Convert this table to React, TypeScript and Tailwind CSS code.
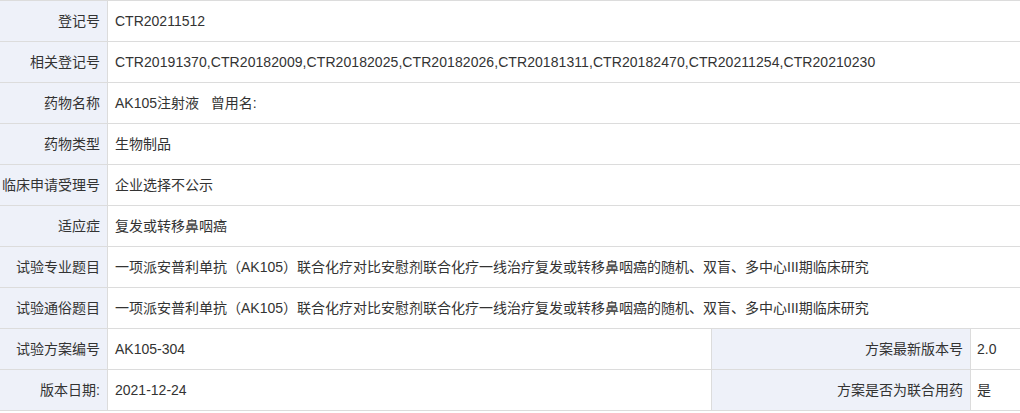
const rows: [string, string][] = [
  ["登记号", "CTR20211512"],
  [
    "相关登记号",
    "CTR20191370,CTR20182009,CTR20182025,CTR20182026,CTR20181311,CTR20182470,CTR20211254,CTR20210230",
  ],
  ["药物名称", "AK105注射液\u00a0\u00a0\u00a0曾用名:"],
  ["药物类型", "生物制品"],
  ["临床申请受理号", "企业选择不公示"],
  ["适应症", "复发或转移鼻咽癌"],
  [
    "试验专业题目",
    "一项派安普利单抗（AK105）联合化疗对比安慰剂联合化疗一线治疗复发或转移鼻咽癌的随机、双盲、多中心III期临床研究",
  ],
  [
    "试验通俗题目",
    "一项派安普利单抗（AK105）联合化疗对比安慰剂联合化疗一线治疗复发或转移鼻咽癌的随机、双盲、多中心III期临床研究",
  ],
];

const split: [string, string, string, string][] = [
  ["试验方案编号", "AK105-304", "方案最新版本号", "2.0"],
  ["版本日期:", "2021-12-24", "方案是否为联合用药", "是"],
];

function Label({ text, className = "" }: { text: string; className?: string }) {
  return (
    <div
      className={`flex shrink-0 items-center justify-end whitespace-nowrap border-r border-[#dcdcdc] bg-[#eef1f9] pr-[7px] ${className}`}
    >
      {text}
    </div>
  );
}

export default function App() {
  return (
    <div
      className="w-[1020px] overflow-hidden bg-white text-[14px] text-[#333]"
      style={{ fontFamily: '"Liberation Sans", "Noto Sans CJK SC", sans-serif' }}
    >
      <div className="border-t border-[#dcdcdc]">
        {rows.map(([k, v]) => (
          <div key={k} className="flex h-[41px] border-b border-[#dcdcdc]">
            <Label text={k} className="w-[108px]" />
            <div
              className={`flex items-center whitespace-nowrap pl-[7px] ${
                k === "相关登记号" ? "tracking-[0.07px]" : ""
              }`}
            >
              {v}
            </div>
          </div>
        ))}
        {split.map(([k, v, k2, v2]) => (
          <div key={k} className="flex h-[41px] border-b border-[#dcdcdc]">
            <Label text={k} className="w-[108px]" />
            <div className="flex w-[604px] shrink-0 items-center border-r border-[#dcdcdc] pl-[7px]">
              {v}
            </div>
            <Label text={k2} className="w-[259px]" />
            <div className="flex items-center pl-[6px]">{v2}</div>
          </div>
        ))}
      </div>
    </div>
  );
}
